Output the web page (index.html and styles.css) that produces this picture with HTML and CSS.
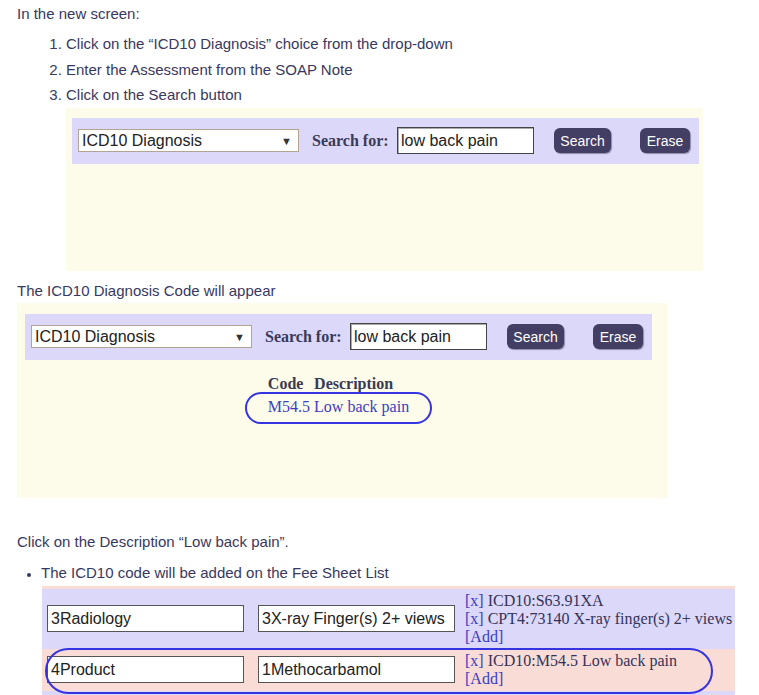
FILE: index.html
```html
<!DOCTYPE html>
<html>
<head>
<meta charset="utf-8">
<link rel="stylesheet" href="styles.css">
</head>
<body>
<p class="line intro">In the new screen:</p>
<ol class="steps">
  <li>Click on the “ICD10 Diagnosis” choice from the drop-down</li>
  <li>Enter the Assessment from the SOAP Note</li>
  <li>Click on the Search button</li>
</ol>
<div class="panel panel-one">
  <div class="searchbar">
    <div class="select"><span class="select-text">ICD10 Diagnosis</span><span class="arrow">▼</span></div>
    <span class="search-label">Search for:</span>
    <div class="field">low back pain</div>
    <span class="btn btn-search">Search</span>
    <span class="btn btn-erase">Erase</span>
  </div>
</div>

<p class="line appear">The ICD10 Diagnosis Code will appear</p>
<div class="panel panel-two">
  <div class="searchbar">
    <div class="select"><span class="select-text">ICD10 Diagnosis</span><span class="arrow">▼</span></div>
    <span class="search-label">Search for:</span>
    <div class="field">low back pain</div>
    <span class="btn btn-search">Search</span>
    <span class="btn btn-erase">Erase</span>
  </div>
  <div class="results">
    <div class="results-wrap">
      <table class="codes">
        <tr><th>Code</th><th>Description</th></tr>
        <tr><td class="link">M54.5</td><td class="link">Low back pain</td></tr>
      </table>
      <div class="oval oval-small"></div>
    </div>
  </div>
</div>

<p class="line click">Click on the Description “Low back pain”.</p>
<ul class="bullets">
  <li>The ICD10 code will be added on the Fee Sheet List</li>
</ul>
<div class="fees">
  <div class="fee-row fee-purple">
    <div class="fee-input">3Radiology</div>
    <div class="fee-input">3X-ray Finger(s) 2+ views</div>
    <div class="fee-text">
      <div><span class="link">[x]</span> ICD10:S63.91XA</div>
      <div><span class="link">[x]</span> CPT4:73140 X-ray finger(s) 2+ views</div>
      <div><span class="link">[Add]</span></div>
    </div>
  </div>
  <div class="fee-row fee-pink">
    <div class="fee-input">4Product</div>
    <div class="fee-input">1Methocarbamol</div>
    <div class="fee-text">
      <div><span class="link">[x]</span> ICD10:M54.5 Low back pain</div>
      <div><span class="link">[Add]</span></div>
    </div>
  </div>
  <div class="fee-row fee-purple fee-empty"></div>
  <div class="oval oval-big"></div>
</div>
</body>
</html>
```

FILE: styles.css
```css
html, body {
  margin: 0;
  padding: 0;
  background: #ffffff;
}
body {
  font-family: "Liberation Sans", Arial, sans-serif;
  font-size: 15px;
  color: #38385e;
}
.line {
  margin: 0;
  padding-left: 17px;
  line-height: 20px;
}
.intro {
  padding-top: 4px;
}
.steps {
  margin: 7px 0 0 0;
  padding-left: 66px;
  line-height: 25.5px;
}
.panel {
  background: #fdfcea;
  box-sizing: border-box;
}
.panel-one {
  margin-left: 66px;
  width: 637px;
  height: 163px;
  padding: 10px 0 0 6px;
}
.appear {
  margin-top: 10px;
}
.panel-two {
  margin-top: 2px;
  margin-left: 17px;
  width: 650px;
  height: 195px;
  padding: 11px 0 0 8px;
}
.searchbar {
  width: 627px;
  height: 46px;
  background: #dcd8fa;
  display: flex;
  align-items: center;
  box-sizing: border-box;
  padding-left: 6px;
}
.select {
  width: 221px;
  height: 23px;
  box-sizing: border-box;
  border: 1px solid #b3a393;
  background: #ffffff;
  display: flex;
  align-items: center;
  justify-content: space-between;
  padding: 0 6px 0 3px;
  color: #222;
  font-size: 16px;
}
.arrow {
  font-size: 11px;
  color: #333;
}
.search-label {
  margin-left: 13px;
  font-family: "Liberation Serif", "Times New Roman", serif;
  font-weight: bold;
  font-size: 16px;
  color: #3a3a58;
  width: 85px;
}
.field {
  width: 137px;
  height: 27px;
  box-sizing: border-box;
  border: 1px solid #444;
  box-shadow: inset 1px 1px 0 #aaa;
  background: #fff;
  font-size: 16px;
  color: #222;
  line-height: 25px;
  padding-left: 3px;
}
.btn {
  height: 25px;
  box-sizing: border-box;
  border-radius: 6px;
  background: #433e63;
  color: #ffffff;
  font-size: 14px;
  display: flex;
  align-items: center;
  justify-content: center;
  box-shadow: 1px 1px 1px #8f8aa8;
}
.btn-search {
  margin-left: 20px;
  width: 57px;
}
.btn-erase {
  margin-left: 29px;
  width: 50px;
}
.results {
  width: 627px;
  padding-top: 12px;
  display: flex;
  justify-content: center;
}
.results-wrap {
  position: relative;
}
.codes {
  border-collapse: collapse;
  font-family: "Liberation Serif", "Times New Roman", serif;
  font-size: 16px;
}
.codes th, .codes td {
  padding: 0 2px;
  line-height: 23px;
  text-align: left;
}
.codes th {
  color: #3a3a58;
}
.link {
  color: #3c3cc4;
}
.oval {
  position: absolute;
  border: 2px solid #3434e0;
  box-sizing: border-box;
}
.oval-small {
  left: -21px;
  top: 20px;
  width: 187px;
  height: 32px;
  border-radius: 16px;
}
.click {
  margin-top: 34px;
}
.bullets {
  margin: 11px 0 0 0;
  padding-left: 41px;
  line-height: 20px;
}
.bullets li::marker {
  font-size: 12px;
}
.fees {
  position: relative;
  margin-top: 3px;
  margin-left: 42px;
  width: 693px;
  background: #fadcd7;
  padding-top: 3px;
}
.fee-row {
  display: flex;
  align-items: center;
  padding: 3px 0 3px 5px;
  box-sizing: border-box;
}
.fee-purple {
  background: #dcd8fa;
}
.fee-pink {
  background: #fadcd7;
}
.fee-empty {
  height: 30px;
}
.fee-input {
  width: 197px;
  height: 27px;
  box-sizing: border-box;
  border: 1px solid #555;
  background: #fff;
  font-size: 16px;
  color: #222;
  line-height: 25px;
  padding-left: 3px;
  margin-right: 14px;
  white-space: nowrap;
  overflow: hidden;
}
.fee-input + .fee-input {
  margin-right: 10px;
}
.fee-text {
  font-family: "Liberation Serif", "Times New Roman", serif;
  font-size: 16px;
  line-height: 18px;
  color: #333358;
  white-space: nowrap;
}
.oval-big {
  left: 3px;
  top: 62px;
  width: 668px;
  height: 46px;
  border-radius: 23px;
  border-width: 2.5px;
}
```
